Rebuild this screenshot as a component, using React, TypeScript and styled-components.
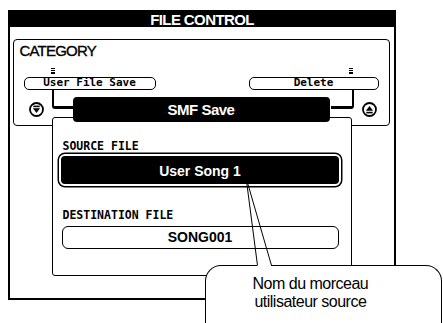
import React from "react";
import styled, { createGlobalStyle } from "styled-components";

const GlobalStyle = createGlobalStyle`
  html, body { margin: 0; padding: 0; background: #fff; }
  body { font-family: "Liberation Sans", Arial, sans-serif; color: #000; }
  * { box-sizing: border-box; }
`;

const Page = styled.div`
  position: relative;
  width: 443px;
  height: 323px;
  overflow: hidden;
  padding: 10px 0 0 8px;
`;

const Screen = styled.div`
  width: 388px;
  height: 290px;
  border: 2px solid #000;
  border-top: none;
  display: flex;
  flex-direction: column;
`;

const TitleBar = styled.div`
  height: 17px;
  margin: 0 -2px;
  padding-top: 1px;
  background: #000;
  color: #fff;
  font-weight: bold;
  font-size: 15px;
  line-height: 15px;
  letter-spacing: -0.6px;
  display: flex;
  align-items: center;
  justify-content: center;
`;

const ScreenBody = styled.div`
  padding: 12px 4px 0 3px;
  display: flex;
  flex-direction: column;
`;

const CategoryBox = styled.div`
  position: relative;
  height: 87px;
  border: 1.5px solid #000;
  border-radius: 4px;
  display: flex;
  flex-direction: column;
`;

const Heading = styled.div`
  padding: 3px 0 0 5.5px;
  font-size: 15px;
  line-height: 16px;
  letter-spacing: -0.8px;
  -webkit-text-stroke: 0.35px #000;
`;

const ButtonRow = styled.div`
  display: flex;
  justify-content: space-between;
  padding: 0 10.5px 0 9.5px;
  margin-top: 8.5px;
`;

const ButtonGroup = styled.div<{ $side: "left" | "right" }>`
  position: relative;
  display: flex;
  flex-direction: column;
  align-items: flex-start;

  &::after {
    content: "";
    position: absolute;
    top: 22px;
    height: 16px;
    border-bottom: 3px solid #000;
    ${({ $side }) =>
      $side === "left"
        ? `left: 28.5px; width: 20.5px; border-left: 2.5px solid #000; border-bottom-left-radius: 3px;`
        : `left: 82px; width: 21.5px; border-right: 2.5px solid #000; border-bottom-right-radius: 3px;`}
  }
`;

const Indicator = styled.div<{ $offset: number }>`
  margin-left: ${({ $offset }) => $offset}px;
  width: 4px;
  height: 6px;
  background: linear-gradient(
    #000 0 1px,
    #fff 1px 2px,
    #000 2px 3px,
    #fff 3px 4px,
    #000 4px 6px
  );
`;

const SoftButton = styled.div<{ $width: number }>`
  margin-top: 3px;
  width: ${({ $width }) => $width}px;
  height: 13px;
  border: 1.5px solid #000;
  border-radius: 5px;
  display: flex;
  align-items: center;
  justify-content: center;
  font-family: "DejaVu Sans Mono", "Liberation Mono", monospace;
  font-weight: bold;
  font-size: 11px;
  line-height: 10px;
`;

const ArrowRow = styled.div`
  display: flex;
  justify-content: space-between;
  padding: 0 12px 0 15px;
  margin-top: 12.5px;
`;

const Dialog = styled.div`
  position: relative;
  z-index: 1;
  margin: -9px 0 0 39px;
  width: 300px;
  height: 159px;
  background: #fff;
  border: 1.5px solid #000;
  border-radius: 3px;
  display: flex;
  flex-direction: column;
  align-items: flex-start;
`;

const DialogHeader = styled.div`
  margin: -21.5px 0 0 19.5px;
  width: 257px;
  height: 25px;
  background: #000;
  border-radius: 4px;
  color: #fff;
  font-weight: bold;
  font-size: 15px;
  letter-spacing: -0.5px;
  display: flex;
  align-items: center;
  justify-content: center;
`;

const FieldLabel = styled.div<{ $gap: number }>`
  margin: ${({ $gap }) => $gap}px 0 0 9.5px;
  font-family: "DejaVu Sans Mono", "Liberation Mono", monospace;
  font-weight: bold;
  font-size: 11.5px;
  line-height: 12px;
`;

const SourceField = styled.div`
  margin: 2px 0 0 6px;
  width: 282px;
  height: 32px;
  padding-top: 2px;
  background: #000;
  border: 2px solid #fff;
  box-shadow: 0 0 0 1.5px #000;
  border-radius: 6px;
  color: #fff;
  font-weight: bold;
  font-size: 14px;
  display: flex;
  align-items: center;
  justify-content: center;
`;

const DestField = styled.div`
  margin: 5px 0 0 8.5px;
  width: 277px;
  height: 23px;
  border: 1.5px solid #000;
  border-radius: 6px;
  font-weight: bold;
  font-size: 14px;
  display: flex;
  align-items: center;
  justify-content: center;
`;

const Callout = styled.div`
  position: absolute;
  left: 205px;
  top: 265px;
  width: 237px;
  height: 70px;
  z-index: 2;
  background: #fff;
  border: 1.5px solid #000;
  border-bottom: none;
  border-radius: 16px 16px 0 0;
  padding: 9.2px 0 0 46.5px;

  &::before {
    content: "";
    position: absolute;
    top: -1.5px;
    left: 51px;
    width: 14px;
    height: 2px;
    background: #fff;
  }
`;

const CalloutText = styled.div`
  display: inline-block;
  text-align: center;
  font-size: 16px;
  line-height: 17.5px;
  letter-spacing: -0.5px;
`;

const PointerLayer = styled.svg`
  position: absolute;
  left: 0;
  top: 0;
  z-index: 3;
  pointer-events: none;
`;

const ArrowIcon = ({ dir }: { dir: "down" | "up" }) => (
  <svg width="15" height="15" viewBox="0 0 15 15">
    <circle cx="7.5" cy="7.5" r="6.5" fill="#fff" stroke="#000" strokeWidth="1.8" />
    {dir === "down" ? (
      <>
        <rect x="4.3" y="3.6" width="6.4" height="1.6" fill="#000" />
        <polygon points="3.9,6.3 11.1,6.3 7.5,11" fill="#000" />
      </>
    ) : (
      <>
        <polygon points="3.9,8.7 11.1,8.7 7.5,4" fill="#000" />
        <rect x="4.3" y="9.8" width="6.4" height="1.6" fill="#000" />
      </>
    )}
  </svg>
);

export default function App() {
  return (
    <>
      <GlobalStyle />
      <Page>
        <Screen>
          <TitleBar>FILE CONTROL</TitleBar>
          <ScreenBody>
            <CategoryBox>
              <Heading>CATEGORY</Heading>
              <ButtonRow>
                <ButtonGroup $side="left">
                  <Indicator $offset={27} />
                  <SoftButton $width={132}>User File Save</SoftButton>
                </ButtonGroup>
                <ButtonGroup $side="right">
                  <Indicator $offset={100} />
                  <SoftButton $width={130}>Delete</SoftButton>
                </ButtonGroup>
              </ButtonRow>
              <ArrowRow>
                <ArrowIcon dir="down" />
                <ArrowIcon dir="up" />
              </ArrowRow>
            </CategoryBox>
            <Dialog>
              <DialogHeader>SMF Save</DialogHeader>
              <FieldLabel $gap={18}>SOURCE FILE</FieldLabel>
              <SourceField>User Song 1</SourceField>
              <FieldLabel $gap={23}>DESTINATION FILE</FieldLabel>
              <DestField>SONG001</DestField>
            </Dialog>
          </ScreenBody>
        </Screen>
        <Callout>
          <CalloutText>
            Nom du morceau
            <br />
            utilisateur source
          </CalloutText>
        </Callout>
        <PointerLayer width="443" height="323" viewBox="0 0 443 323">
          <line x1="246.5" y1="181" x2="257.5" y2="265.5" stroke="#000" strokeWidth="1" />
          <line x1="247" y1="181" x2="271.5" y2="265.5" stroke="#000" strokeWidth="1" />
        </PointerLayer>
      </Page>
    </>
  );
}
